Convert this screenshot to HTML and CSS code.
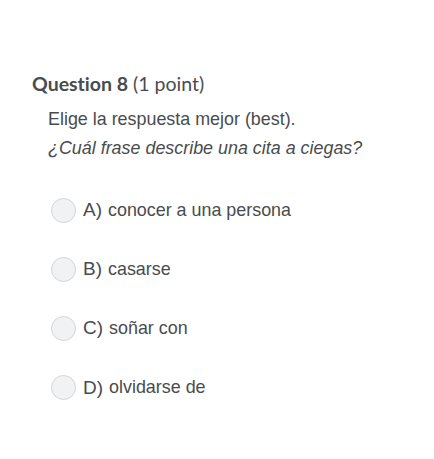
FILE: index.html
```html
<!DOCTYPE html>
<html lang="es">
<head>
<meta charset="utf-8">
<link rel="stylesheet" href="styles.css">
</head>
<body>
<div class="question">
  <h2 class="title"><span class="q">Question 8</span> <span class="pts">(1 point)</span></h2>
  <div class="body">
    <p class="prompt">Elige la respuesta mejor (best).</p>
    <p class="prompt italic">¿Cuál frase describe una cita a ciegas?</p>
    <ul class="options">
      <li class="option"><span class="radio"></span><span class="letter">A)</span><span class="text">conocer a una persona</span></li>
      <li class="option"><span class="radio"></span><span class="letter">B)</span><span class="text">casarse</span></li>
      <li class="option"><span class="radio"></span><span class="letter">C)</span><span class="text">soñar con</span></li>
      <li class="option"><span class="radio"></span><span class="letter">D)</span><span class="text">olvidarse de</span></li>
    </ul>
  </div>
</div>
</body>
</html>
```

FILE: styles.css
```css
html, body {
  margin: 0;
  padding: 0;
  background: #ffffff;
}
body {
  font-family: "Liberation Sans", Arial, sans-serif;
  color: #494c4e;
}
.question {
  padding: 72px 0 0 32px;
}
.title {
  margin: 0;
  font-family: Lato, sans-serif;
  font-size: 19.5px;
  line-height: 24px;
  font-weight: 400;
  color: #494c4e;
  font-variant-ligatures: none;
}
.title .q {
  font-weight: 700;
}
.body {
  padding-left: 16px;
  padding-top: 9px;
}
.prompt {
  margin: 0;
  font-size: 17.9px;
  line-height: 29px;
  color: #494c4e;
}
.italic {
  font-style: italic;
}
.options {
  list-style: none;
  margin: 0;
  padding: 35px 0 0 3px;
  display: flex;
  flex-direction: column;
  gap: 35.2px;
}
.option {
  display: flex;
  align-items: center;
  height: 24px;
}
.radio {
  width: 23px;
  height: 23px;
  border: 1px solid #d3d5d8;
  border-radius: 50%;
  background: #f1f2f4;
  flex: none;
}
.letter {
  margin-left: 7px;
  font-size: 19px;
  color: #494c4e;
}
.text {
  margin-left: 6px;
  font-size: 17.9px;
  color: #494c4e;
}
```
